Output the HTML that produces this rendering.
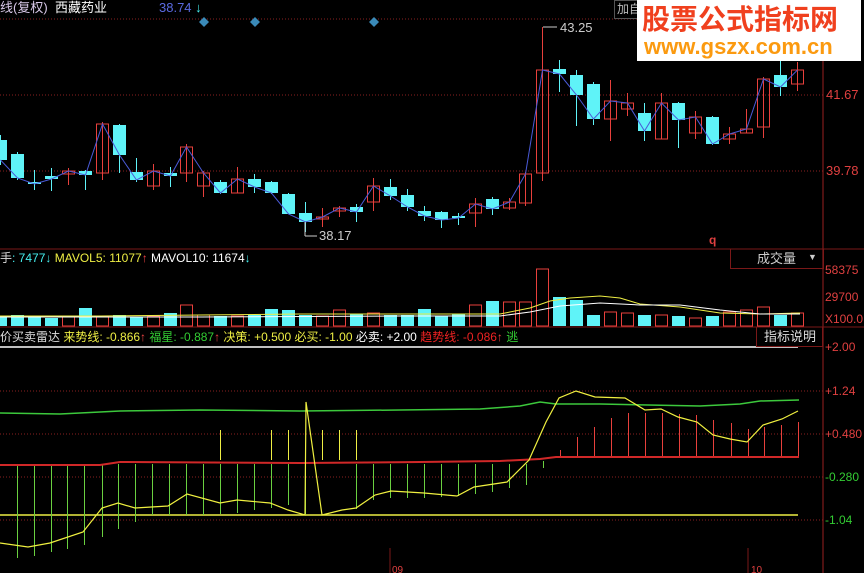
<!DOCTYPE html>
<html><head><meta charset="utf-8">
<style>
html,body{margin:0;padding:0;background:#000;width:864px;height:573px;overflow:hidden}
#w{position:relative;width:864px;height:573px;font-family:"Liberation Sans","Noto Sans CJK SC",sans-serif;font-size:12px}
.t{position:absolute;white-space:nowrap;line-height:14px}
svg{position:absolute;left:0;top:0}
</style></head><body><div id="w">
<svg id="s" width="864" height="573"></svg>
<div class="t" style="left:0;top:1px;color:#d8c8e8;font-size:13px">线(复权)</div>
<div class="t" style="left:55px;top:1px;color:#fff;font-size:13px">西藏药业</div>
<div class="t" style="left:159px;top:1px;color:#5a6ae0;font-size:13px">38.74 <b style="color:#4ee">↓</b></div>
<div class="t" style="left:614px;top:0;width:26px;height:17px;border:1px solid #555;color:#bbb;font-size:12px;line-height:16px;padding-left:2px">加自</div>
<div style="position:absolute;left:637px;top:0;width:224px;height:61px;background:#fff"></div>
<div class="t" style="left:642px;top:4px;color:#f0401e;font-size:28px;font-weight:bold;line-height:32px">股票公式指标网</div>
<div class="t" style="left:644px;top:36px;color:#fb9a10;font-size:22px;font-weight:bold;line-height:22px">www.gszx.com.cn</div>
<div class="t" style="left:826px;top:88px;color:#e04040;font-size:13px">41.67</div>
<div class="t" style="left:826px;top:164px;color:#e04040;font-size:13px">39.78</div>
<div class="t" style="left:560px;top:21px;color:#ccc;font-size:13px">43.25</div>
<div class="t" style="left:319px;top:229px;color:#ccc;font-size:13px">38.17</div>
<div class="t" style="left:709px;top:233px;color:#e04040;font-weight:bold">q</div>
<div class="t" style="left:0;top:251px;color:#4ee"><span style="color:#ddd">手</span>: 7477<b>↓</b> <span style="color:#ee4">MAVOL5: 11077</span><b style="color:#e44">↑</b> <span style="color:#fff">MAVOL10: 11674</span><b>↓</b></div>
<div style="position:absolute;left:730px;top:249px;width:92px;height:19px;border:1px solid #7a1818;border-top:none"></div>
<div class="t" style="left:757px;top:252px;color:#ccc;font-size:13px">成交量</div>
<div class="t" style="left:808px;top:250px;color:#ccc;font-size:9px">▼</div>
<div class="t" style="left:825px;top:263px;color:#e04040">58375</div>
<div class="t" style="left:825px;top:290px;color:#e04040">29700</div>
<div class="t" style="left:825px;top:312px;color:#e04040">X100.0</div>
<div class="t" style="left:0;top:330px;color:#ee4"><span style="color:#ddd">价买卖雷达</span> 来势线: -0.866<b style="color:#e44">↑</b> <span style="color:#3c3">福星: -0.887</span><b style="color:#e44">↑</b> 决策: +0.500 必买: -1.00 <span style="color:#fff">必卖: +2.00</span> <span style="color:#e22">趋势线: -0.086</span><b style="color:#e44">↑</b> <span style="color:#3c3">逃</span></div>
<div style="position:absolute;left:756px;top:327px;width:65px;height:19px;border:1px solid #7a1818;border-top:none"></div>
<div class="t" style="left:764px;top:330px;color:#ddd;font-size:13px">指标说明</div>
<div class="t" style="left:825px;top:340px;color:#e04040">+2.00</div>
<div class="t" style="left:825px;top:384px;color:#e04040">+1.24</div>
<div class="t" style="left:825px;top:427px;color:#e04040">+0.480</div>
<div class="t" style="left:825px;top:470px;color:#3c3">-0.280</div>
<div class="t" style="left:825px;top:513px;color:#3c3">-1.04</div>
<div class="t" style="left:392px;top:564px;color:#e04040;font-size:10px">09</div>
<div class="t" style="left:751px;top:564px;color:#e04040;font-size:10px">10</div>
</div>
<script>
var s=document.getElementById('s'),h='';
function L(x1,y1,x2,y2,c,w,d){h+='<line x1="'+x1+'" y1="'+y1+'" x2="'+x2+'" y2="'+y2+'" stroke="'+c+'" stroke-width="'+(w||1)+'"'+(d?' stroke-dasharray="'+d+'"':'')+'/>';}
function R(x,y,w,hh,c,f){h+='<rect x="'+x+'" y="'+y+'" width="'+w+'" height="'+Math.max(hh,1)+'" '+(f?'fill="'+c+'"':'fill="none" stroke="'+c+'"')+'/>';}
function P(pts,c,w){h+='<polyline points="'+pts.map(function(p){return p[0]+','+p[1]}).join(' ')+'" fill="none" stroke="'+c+'" stroke-width="'+(w||1)+'"/>';}
var RED='#e8403c',CY='#5ff3f8',GR='#8a2020';
[19,95,171].forEach(function(y){L(0,y,823,y,GR,1,'1,2');});
L(823,0,823,573,'#9a2020');
L(0,249,864,249,'#7a1818');L(0,327,864,327,'#7a1818');
[391,434,477,520].forEach(function(y){L(0,y,823,y,GR,1,'1,2');});
L(390,548,390,573,'#7a1818');L(748,548,748,573,'#7a1818');
[204,255,374].forEach(function(x){h+='<polygon points="'+x+',17 '+(x+5)+',22 '+x+',27 '+(x-5)+',22" fill="#3a8ab8"/>';});
var C=[[0,140,160,135,165],[0,154,178,152,180],[0,182,184,170,190],[0,176,179,168,191],[1,171,174,168,185],[0,171,175,170,190],[1,124,173,122,180],[0,125,155,124,173],[0,172,180,158,182],[1,171,186,164,190],[0,173,176,167,187],[1,147,173,144,182],[1,173,186,171,197],[0,182,193,180,194],[1,179,193,167,193],[0,179,187,174,193],[0,182,193,181,194],[0,194,214,193,214],[0,213,222,202,232],[1,217,219,208,227],[1,208,211,206,217],[0,207,212,204,222],[1,186,202,178,211],[0,187,196,179,200],[0,195,207,189,211],[0,211,216,206,221],[0,212,220,211,228],[0,216,218,213,225],[1,204,213,198,227],[0,199,209,197,215],[1,202,208,198,210],[1,174,203,172,206],[1,70,173,27,181],[0,69,74,60,92],[0,75,95,70,126],[0,84,119,82,125],[1,101,119,80,141],[1,103,109,93,116],[0,113,131,103,141],[1,103,139,93,139],[0,103,120,102,148],[1,117,133,111,139],[0,117,144,116,145],[1,134,139,127,144],[1,129,133,109,133],[1,79,127,77,138],[0,75,87,61,96],[1,70,84,62,91]];
var ma=[];
C.forEach(function(c,i){var x=Math.round(i*16.95)+0.5,col=c[0]?RED:CY;
 L(x,c[3],x,c[4],col);
 if(c[0])R(x-6,c[1],12,c[2]-c[1],col,false);else R(x-6.5,c[1],13,c[2]-c[1],col,true);
 ma.push([x,c[0]?c[1]:c[2]]);});
P(ma,'#4a5ad8');
L(543,27,557,27,'#ccc');L(305,222,305,236,'#ccc');L(305,236,317,236,'#ccc');
var V=[316,315,316,318,317,308,316,315,317,316,313,305,315,316,316,315,309,310,315,316,310,314,313,315,315,309,316,314,305,301,302,269,297,305,300,315,312,313,315,315,316,318,316,312,310,307,315,313];
V.forEach(function(t,i){var x=Math.round(i*16.95)+0.5,up=C[i][0];if(i==32)t=269;if(i==31)t=302;if(i==33)t=297;
 if(up)R(x-6,t,12,326-t,RED,false);else R(x-6.5,t,13,326-t,CY,true);});
P([[0,316],[100,316],[200,315],[300,314],[400,314],[500,314],[530,308],[550,301],[570,298],[600,296],[620,298],[640,304],[680,307],[720,313],[760,314],[800,313]],'#ee4');
P([[0,317],[200,317],[400,316],[500,316],[530,312],[560,306],[600,303],[640,305],[680,305],[720,310],[760,314],[800,314]],'#fff');
L(0,347,798,347,'#fff',1.5);
L(0,515,798,515,'#ee4',1.5);
var G=[[0,413],[60,414],[120,411],[200,410],[300,411],[400,410],[480,409],[520,406],[540,402],[556,404],[600,404],[700,406],[740,404],[760,401],[799,400]];
var Rd=[[0,465],[100,465],[120,462],[300,463],[420,462],[500,461],[520,460],[540,459],[556,457],[799,457]];
var gb=[[17,558],[34,556],[51,552],[67,549],[84,545],[102,537],[118,529],[135,522],[152,515],[169,515],[186,515],[203,515],[220,514],[237,513],[254,510],[271,508],[288,505],[305,515],[356,509],[373,500],[390,498],[407,498],[424,498],[441,497],[458,496],[475,494],[492,492],[509,488],[526,485]];
gb.forEach(function(b){L(b[0]+0.5,464,b[0]+0.5,b[1],'#6ad040');});
L(543.5,461,543.5,468,'#6ad040');
[220,271,288,322,339,356].forEach(function(x){L(x+.5,460,x+.5,430,'#ee4');});
[[560,450],[577,437],[594,427],[611,418],[628,413],[645,413],[662,413],[679,414],[696,415],[713,420],[731,423],[748,429],[764,427],[781,425],[798,422]].forEach(function(b){L(b[0]+.5,458,b[0]+.5,b[1],RED);});
P(G,'#3cc83c',1.5);P(Rd,'#d02828',2);
var Y=[[0,543],[28,547],[50,543],[83,532],[102,508],[118,503],[135,508],[168,506],[187,494],[220,503],[237,500],[270,503],[288,510],[305,515],[306,402],[322,515],[342,510],[356,508],[375,495],[391,491],[424,493],[457,496],[474,487],[507,482],[529,460],[546,422],[559,398],[576,391],[595,397],[625,398],[645,410],[661,409],[678,417],[697,422],[713,435],[730,439],[747,442],[763,425],[782,419],[798,411]];
P(Y,'#f0f040',1.2);
s.innerHTML=h;
</script>
</body></html>
